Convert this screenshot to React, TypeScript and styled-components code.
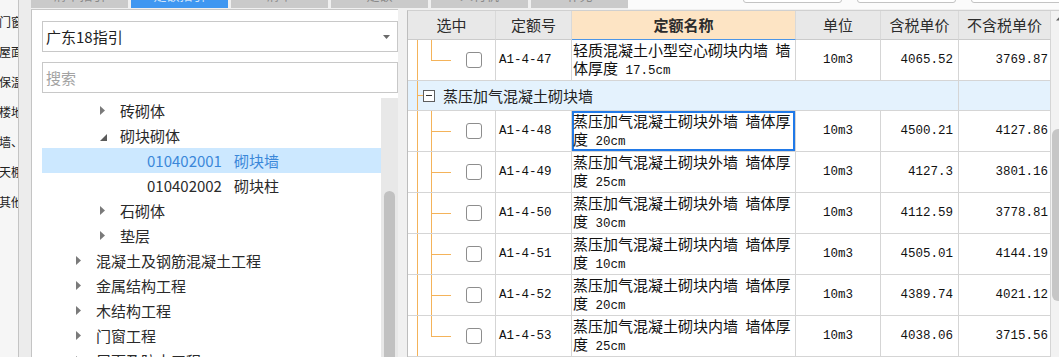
import React from "react";
import styled, { createGlobalStyle } from "styled-components";

const CJK = `"Noto Sans CJK SC", "Noto Sans", sans-serif`;
const MONO = `"Liberation Mono", "DejaVu Sans Mono", monospace`;
const ORANGE = "#f4b35a";

const GlobalStyle = createGlobalStyle`
  html, body { margin: 0; padding: 0; background: #f0f0f0; overflow: hidden; }
  *, *::before, *::after { box-sizing: border-box; }
`;

const Screen = styled.div`
  width: 1059px;
  height: 357px;
  overflow: hidden;
  display: flex;
  background: #f0f0f0;
  font-family: ${CJK};
`;

/* ---------- left strip ---------- */
const SideStrip = styled.div`
  width: 19px;
  flex: none;
  background: #f6f6f6;
  border-right: 1px solid #c4c4c4;
  overflow: hidden;
  padding-top: 7px;
`;
const SideItem = styled.div`
  height: 30px;
  line-height: 30px;
  font-size: 12px;
  color: #222;
  white-space: nowrap;
  margin-left: -1px;
`;
const Gutter = styled.div`
  width: 12px;
  flex: none;
  background: #ececec;
`;

/* ---------- main ---------- */
const Main = styled.div`
  flex: 1;
  min-width: 0;
  display: flex;
  flex-direction: column;
`;
const TopBar = styled.div`
  height: 9px;
  flex: none;
  display: flex;
  background: #f0f0f0;
`;
const Tabs = styled.div`
  display: flex;
  gap: 3px;
  flex: none;
`;
const Tab = styled.div<{ $active?: boolean }>`
  width: 97px;
  height: 8px;
  overflow: hidden;
  display: flex;
  align-items: flex-end;
  justify-content: center;
  background: ${(p) => (p.$active ? "#3f97f1" : "#cacaca")};
  color: ${(p) => (p.$active ? "#cfe4fb" : "#8a8a8a")};
  font-size: 13px;
`;
const TabLabel = styled.span`
  line-height: 16px;
  margin-bottom: 5px;
  white-space: nowrap;
`;
const Toolbar = styled.div`
  flex: 1;
  display: flex;
  align-items: flex-start;
  gap: 15px;
  padding-left: 115px;
  background: #fbfbfb;
  overflow: hidden;
`;
const ToolButton = styled.div`
  width: 99px;
  height: 20px;
  margin-top: -17px;
  flex: none;
  border: 1px solid #c3c3c3;
  border-radius: 3px;
  background: #ffffff;
`;

const Content = styled.div`
  flex: 1;
  display: flex;
  min-height: 0;
`;

/* ---------- left panel ---------- */
const LeftPanel = styled.div`
  width: 367px;
  flex: none;
  background: #ffffff;
  border-top: 1px solid #c8c8c8;
  border-left: 1px solid #c4c4c4;
  padding: 11px 0 0 10px;
  display: flex;
  flex-direction: column;
  min-height: 0;
`;
const Select = styled.div`
  height: 31px;
  flex: none;
  border: 1px solid #c8c8c8;
  background: #ffffff;
  display: flex;
  align-items: center;
  justify-content: space-between;
  padding: 0 7px 0 3px;
  font-size: 15px;
  color: #222;
`;
const SearchInput = styled.input`
  height: 31px;
  flex: none;
  margin-top: 10px;
  border: 1px solid #c8c8c8;
  padding: 0 3px;
  font-family: ${CJK};
  font-size: 15px;
  color: #222;
  outline: none;
  background: #ffffff;
  &::placeholder {
    color: #a3a3a3;
  }
`;
const TreeArea = styled.div`
  flex: 1;
  min-height: 0;
  margin-top: 5px;
  display: flex;
  overflow: hidden;
`;
const TreeList = styled.div`
  width: 339px;
  flex: none;
`;
const TreeRow = styled.div<{ $indent: number; $selected?: boolean }>`
  height: 25px;
  line-height: 25px;
  display: flex;
  align-items: center;
  padding-left: ${(p) => p.$indent}px;
  background: ${(p) => (p.$selected ? "#cce8ff" : "transparent")};
  color: ${(p) => (p.$selected ? "#3a87d9" : "#2a2a2a")};
  font-size: 15px;
  white-space: nowrap;
`;
const Expander = styled.span<{ $down?: boolean }>`
  width: 20px;
  flex: none;
  display: flex;
  align-items: center;
  padding-top: ${(p) => (p.$down ? "4px" : "0")};
`;
const Code = styled.span`
  margin-right: 12px;
`;
const TreeScroll = styled.div`
  width: 17px;
  flex: none;
  background: #e8e8e8;
  display: flex;
  flex-direction: column;
  align-items: center;
  padding-top: 4px;
`;
const TreeThumb = styled.div`
  width: 11px;
  height: 240px;
  margin-top: 89px;
  border-radius: 6px;
  background: #c1c1c1;
  flex: none;
`;

const Splitter = styled.div`
  width: 9px;
  flex: none;
  background: #f0f0f0;
`;

/* ---------- grid ---------- */
const GridPane = styled.div`
  flex: 1;
  min-width: 0;
  margin-top: 1px;
  display: flex;
  background: #ffffff;
  border-top: 1px solid #d0d0d0;
  border-left: 1px solid #bdbdbd;
  overflow: hidden;
`;
const Table = styled.div`
  width: 643px;
  flex: none;
  display: flex;
  flex-direction: column;
`;
const COLS = "88px 76px 224px 85px 78px 92px";
const HeaderRow = styled.div`
  display: grid;
  grid-template-columns: ${COLS};
  height: 29px;
  flex: none;
`;
const HeaderCell = styled.div<{ $accent?: boolean }>`
  border-right: 1px solid #d9d9d9;
  border-bottom: 1px solid ${(p) => (p.$accent ? "#4c95e6" : "#cbcbcb")};
  background: ${(p) => (p.$accent ? "#fde4c4" : "#e8e8e8")};
  font-weight: ${(p) => (p.$accent ? 700 : 400)};
  color: #2c2c2c;
  font-size: 15px;
  line-height: 28px;
  text-align: center;
`;
const DataRow = styled.div`
  display: grid;
  grid-template-columns: ${COLS};
  height: 41px;
  flex: none;
`;
const Cell = styled.div<{ $align?: "left" | "center" | "right"; $pad?: number }>`
  border-right: 1px solid #d5d5d5;
  border-bottom: 1px solid #d5d5d5;
  display: flex;
  align-items: center;
  justify-content: ${(p) =>
    p.$align === "right" ? "flex-end" : p.$align === "center" ? "center" : "flex-start"};
  padding: 0 ${(p) => (p.$align === "right" ? p.$pad ?? 5 : 0)}px 0 ${(p) =>
      p.$align === "left" ? p.$pad ?? 3 : 0}px;
  font-family: ${MONO};
  font-size: 12.5px;
  color: #111;
  white-space: nowrap;
`;
const SelectCell = styled.div`
  border-right: 1px solid #d5d5d5;
  border-bottom: 1px solid #d5d5d5;
  display: flex;
  align-items: stretch;
  padding-left: 9px;
`;
const Rail = styled.span`
  width: 1px;
  flex: none;
  align-self: stretch;
  background: ${ORANGE};
`;
const Branch = styled.span`
  width: 20px;
  flex: none;
  margin-left: 13px;
  display: flex;
  flex-direction: column;
`;
const BranchTop = styled.span`
  height: 21px;
  flex: none;
  border-left: 1px solid ${ORANGE};
  border-bottom: 1px solid ${ORANGE};
`;
const BranchRest = styled.span<{ $last?: boolean }>`
  flex: 1;
  border-left: 1px solid ${(p) => (p.$last ? "transparent" : ORANGE)};
`;
const Checkbox = styled.span`
  width: 16px;
  height: 16px;
  align-self: center;
  margin-left: 15px;
  border: 1px solid #8d8d8d;
  border-radius: 3px;
  background: #ffffff;
  flex: none;
`;
const NameCell = styled.div<{ $focus?: boolean }>`
  border-right: 1px solid #d5d5d5;
  border-bottom: 1px solid #d5d5d5;
  padding: 1px 2px 0 1px;
  font-size: 15px;
  line-height: 18px;
  color: #111;
  overflow: hidden;
  box-shadow: ${(p) => (p.$focus ? "inset 0 0 0 2px #2079e8" : "none")};
`;
const Half = styled.span`
  font-family: ${MONO};
  font-size: 12.5px;
  line-height: 0;
  white-space: pre-wrap;
`;
const GroupRow = styled.div`
  display: grid;
  grid-template-columns: 551px 92px;
  height: 30px;
  flex: none;
  background: #e4f2fd;
`;
const GroupCell = styled.div`
  border-right: 1px solid #d5d5d5;
  border-bottom: 1px solid #d5d5d5;
  display: flex;
  align-items: center;
  padding-left: 9px;
  font-size: 15px;
  color: #222;
  white-space: nowrap;
`;
const Stub = styled.span`
  width: 5px;
  height: 1px;
  flex: none;
  background: ${ORANGE};
`;
const Collapse = styled.span`
  width: 12px;
  height: 12px;
  flex: none;
  border: 1px solid #5e5e5e;
  background: #ffffff;
  display: flex;
  align-items: center;
  justify-content: center;
  margin-right: 8px;
`;
const Minus = styled.span`
  width: 6px;
  height: 1px;
  background: #333;
`;
const VScroll = styled.div`
  width: 17px;
  flex: none;
  background: #f2f2f2;
  display: flex;
  flex-direction: column;
  align-items: flex-start;
  padding: 4px 0 0 1px;
`;
const VArrow = styled.span`
  margin-left: 4px;
  display: flex;
`;
const VThumb = styled.div`
  width: 12px;
  height: 172px;
  margin-top: 108px;
  border-radius: 6px;
  background: #c6c6c6;
  flex: none;
`;

/* ---------- icons ---------- */
const RightTri = () => (
  <svg width="5" height="9" viewBox="0 0 5 9">
    <polygon points="0,0 5,4.5 0,9" fill="#7a7a7a" />
  </svg>
);
const DownTri = () => (
  <svg width="7" height="7" viewBox="0 0 7 7">
    <polygon points="7,0 7,7 0,7" fill="#5a5a5a" />
  </svg>
);
const UpTri = () => (
  <svg width="9" height="6" viewBox="0 0 9 6">
    <polygon points="0,5.5 4.5,0.5 9,5.5" fill="#606060" />
  </svg>
);
const Caret = () => (
  <svg width="7" height="4" viewBox="0 0 7 4">
    <polygon points="0,0 7,0 3.5,4" fill="#6a6a6a" />
  </svg>
);

/* ---------- data ---------- */
type TreeItem = {
  level: 1 | 2 | 3;
  text: string;
  code?: string;
  arrow?: "right" | "down";
  selected?: boolean;
};
const INDENT: Record<number, number> = { 1: 34, 2: 58, 3: 105 };

const tree: TreeItem[] = [
  { level: 2, text: "砖砌体", arrow: "right" },
  { level: 2, text: "砌块砌体", arrow: "down" },
  { level: 3, code: "010402001", text: "砌块墙", selected: true },
  { level: 3, code: "010402002", text: "砌块柱" },
  { level: 2, text: "石砌体", arrow: "right" },
  { level: 2, text: "垫层", arrow: "right" },
  { level: 1, text: "混凝土及钢筋混凝土工程", arrow: "right" },
  { level: 1, text: "金属结构工程", arrow: "right" },
  { level: 1, text: "木结构工程", arrow: "right" },
  { level: 1, text: "门窗工程", arrow: "right" },
  { level: 1, text: "屋面及防水工程", arrow: "right" },
];

type Quota = {
  code: string;
  name: string;
  unit: string;
  tax: string;
  noTax: string;
  last?: boolean;
  focus?: boolean;
};

const before: Quota = {
  code: "A1-4-47",
  name: "轻质混凝土小型空心砌块内墙 墙体厚度 17.5cm",
  unit: "10m3",
  tax: "4065.52",
  noTax: "3769.87",
  last: true,
};

const quotas: Quota[] = [
  { code: "A1-4-48", name: "蒸压加气混凝土砌块外墙 墙体厚度 20cm", unit: "10m3", tax: "4500.21", noTax: "4127.86", focus: true },
  { code: "A1-4-49", name: "蒸压加气混凝土砌块外墙 墙体厚度 25cm", unit: "10m3", tax: "4127.3", noTax: "3801.16" },
  { code: "A1-4-50", name: "蒸压加气混凝土砌块外墙 墙体厚度 30cm", unit: "10m3", tax: "4112.59", noTax: "3778.81" },
  { code: "A1-4-51", name: "蒸压加气混凝土砌块内墙 墙体厚度 10cm", unit: "10m3", tax: "4505.01", noTax: "4144.19" },
  { code: "A1-4-52", name: "蒸压加气混凝土砌块内墙 墙体厚度 20cm", unit: "10m3", tax: "4389.74", noTax: "4021.12" },
  { code: "A1-4-53", name: "蒸压加气混凝土砌块内墙 墙体厚度 25cm", unit: "10m3", tax: "4038.06", noTax: "3715.56", last: true },
];

const sideItems = ["门窗工程", "屋面及防水工程", "保温、隔热工程", "楼地面装饰工程", "墙、柱面装饰工程", "天棚工程", "其他装饰工程"];
const tabs = ["清单指引", "定额指引", "清单", "定额", "人材机", "补充"];

const mixed = (s: string) =>
  s
    .split(/([\x20-\x7e]+)/)
    .filter(Boolean)
    .map((part, i) =>
      /^[\x20-\x7e]+$/.test(part) ? <Half key={i}>{part}</Half> : <React.Fragment key={i}>{part}</React.Fragment>
    );

const QuotaRow = ({ q }: { q: Quota }) => (
  <DataRow>
    <SelectCell>
      <Rail />
      <Branch>
        <BranchTop />
        <BranchRest $last={q.last} />
      </Branch>
      <Checkbox />
    </SelectCell>
    <Cell $align="left" $pad={3}>{q.code}</Cell>
    <NameCell $focus={q.focus}>{mixed(q.name)}</NameCell>
    <Cell $align="center">{q.unit}</Cell>
    <Cell $align="right" $pad={5}>{q.tax}</Cell>
    <Cell $align="right" $pad={2}>{q.noTax}</Cell>
  </DataRow>
);

export default function App() {
  return (
    <>
      <GlobalStyle />
      <Screen>
        <SideStrip>
          {sideItems.map((s) => (
            <SideItem key={s}>{s}</SideItem>
          ))}
        </SideStrip>
        <Gutter />
        <Main>
          <TopBar>
            <Tabs>
              {tabs.map((t, i) => (
                <Tab key={t} $active={i === 1}>
                  <TabLabel>{t}</TabLabel>
                </Tab>
              ))}
            </Tabs>
            <Toolbar>
              <ToolButton />
              <ToolButton />
              <ToolButton />
            </Toolbar>
          </TopBar>
          <Content>
            <LeftPanel>
              <Select>
                <span>广东18指引</span>
                <Caret />
              </Select>
              <SearchInput placeholder="搜索" readOnly />
              <TreeArea>
                <TreeList>
                  {tree.map((n, i) => (
                    <TreeRow key={i} $indent={INDENT[n.level]} $selected={n.selected}>
                      {n.arrow && (
                        <Expander $down={n.arrow === "down"}>
                          {n.arrow === "down" ? <DownTri /> : <RightTri />}
                        </Expander>
                      )}
                      {n.code && <Code>{n.code}</Code>}
                      <span>{n.text}</span>
                    </TreeRow>
                  ))}
                </TreeList>
                <TreeScroll>
                  <UpTri />
                  <TreeThumb />
                </TreeScroll>
              </TreeArea>
            </LeftPanel>
            <Splitter />
            <GridPane>
              <Table>
                <HeaderRow>
                  <HeaderCell>选中</HeaderCell>
                  <HeaderCell>定额号</HeaderCell>
                  <HeaderCell $accent>定额名称</HeaderCell>
                  <HeaderCell>单位</HeaderCell>
                  <HeaderCell>含税单价</HeaderCell>
                  <HeaderCell>不含税单价</HeaderCell>
                </HeaderRow>
                <QuotaRow q={before} />
                <GroupRow>
                  <GroupCell>
                    <Rail />
                    <Stub />
                    <Collapse>
                      <Minus />
                    </Collapse>
                    蒸压加气混凝土砌块墙
                  </GroupCell>
                  <GroupCell />
                </GroupRow>
                {quotas.map((q) => (
                  <QuotaRow key={q.code} q={q} />
                ))}
              </Table>
              <VScroll>
                <VArrow>
                  <UpTri />
                </VArrow>
                <VThumb />
              </VScroll>
            </GridPane>
          </Content>
        </Main>
      </Screen>
    </>
  );
}
